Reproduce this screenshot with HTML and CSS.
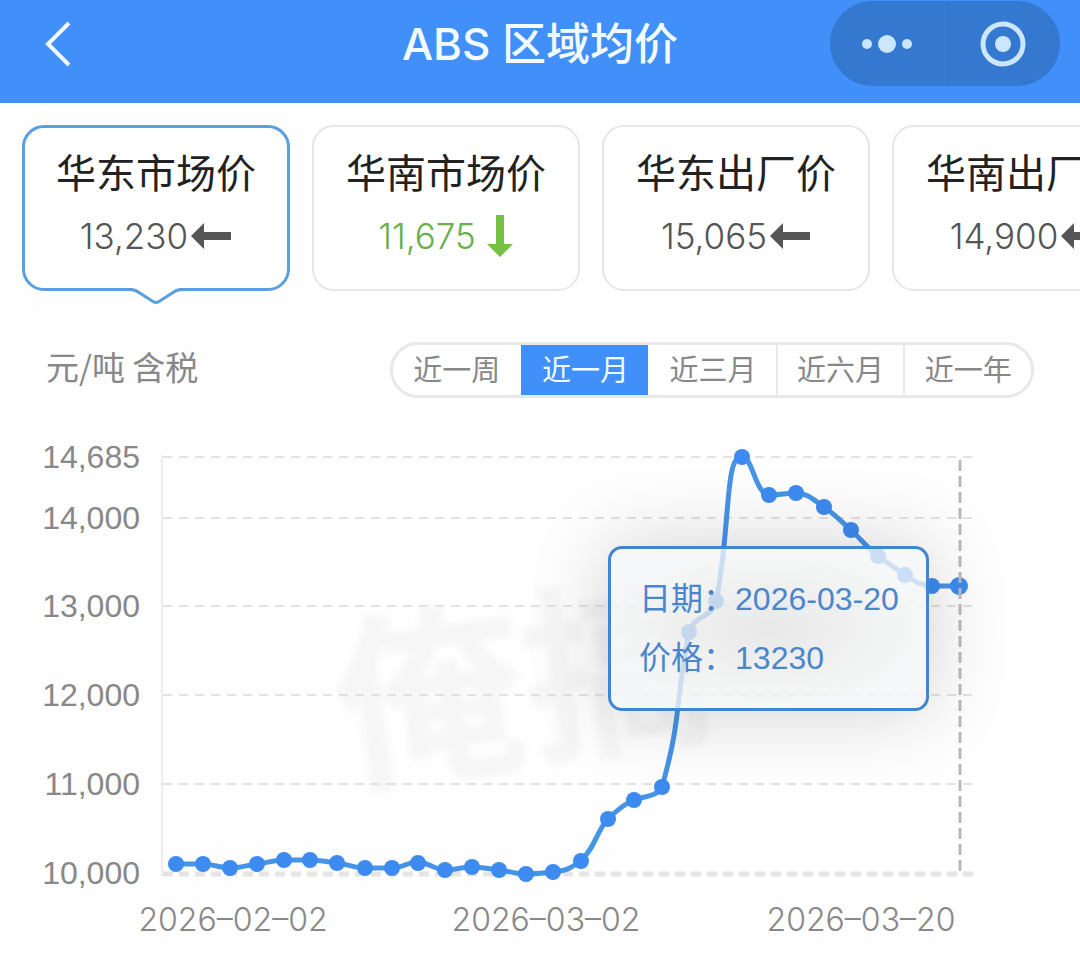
FILE: index.html
```html
<!DOCTYPE html>
<html lang="zh-CN">
<head>
<meta charset="utf-8">
<meta name="viewport" content="width=device-width, initial-scale=1">
<title>ABS 区域均价</title>
<link rel="stylesheet" href="styles.css">
</head>
<body>
<header class="topbar">
  <button class="back" type="button" aria-label="返回">
    <svg width="28" height="48" viewBox="0 0 28 48"><path d="M25 3 4 24l21 21"/></svg>
  </button>
  <h1 class="title">ABS 区域均价</h1>
  <div class="capsule">
    <button class="capsule-btn" type="button" aria-label="更多">
      <svg width="52" height="24" viewBox="0 0 52 24"><circle cx="6" cy="12" r="5"/><circle cx="26" cy="12" r="9"/><circle cx="46" cy="12" r="5"/></svg>
    </button>
    <button class="capsule-btn" type="button" aria-label="关闭">
      <svg width="48" height="48" viewBox="0 0 48 48"><circle class="ring" cx="24" cy="24" r="20"/><circle cx="24" cy="24" r="8"/></svg>
    </button>
  </div>
</header>
<main>
  <nav class="cards" aria-label="市场">
    <button class="card active" type="button">
      <span class="name">华东市场价</span>
      <span class="price">13,230<svg class="flat" width="42" height="28" viewBox="0 0 42 28"><path d="M1 14 14 1v9h27v8H14v9z"/></svg></span>
      <svg class="pointer" width="52" height="20" viewBox="0 0 52 20"><path class="mask" d="M3 0h46v2L28 15q-2 1-4 0L3 2z"/><path class="edge" d="M0 1.5q5 0 9 3l14 9q3 2 6 0l14-9q4-3 9-3"/></svg>
    </button>
    <button class="card" type="button">
      <span class="name">华南市场价</span>
      <span class="price down">11,675<svg class="drop" width="28" height="42" viewBox="0 0 28 42"><path d="M10 0h8v29h9L14 42 1 29h9z"/></svg></span>
    </button>
    <button class="card" type="button">
      <span class="name">华东出厂价</span>
      <span class="price">15,065<svg class="flat" width="42" height="28" viewBox="0 0 42 28"><path d="M1 14 14 1v9h27v8H14v9z"/></svg></span>
    </button>
    <button class="card" type="button">
      <span class="name">华南出厂价</span>
      <span class="price">14,900<svg class="flat" width="42" height="28" viewBox="0 0 42 28"><path d="M1 14 14 1v9h27v8H14v9z"/></svg></span>
    </button>
  </nav>
  <section class="filters">
    <span class="unit">元/吨 含税</span>
    <div class="ranges">
      <button class="range" type="button">近一周</button>
      <button class="range selected" type="button">近一月</button>
      <button class="range" type="button">近三月</button>
      <button class="range" type="button">近六月</button>
      <button class="range" type="button">近一年</button>
    </div>
  </section>
  <section class="chart">
    <svg class="plot" viewBox="0 398 1080 570" role="img" aria-label="价格走势">
      <g class="watermark" transform="rotate(-8 430 700)">
        <text x="335" y="767">俺搞</text>
      </g>
      <path class="axis" d="M162 455V876"/>
      <path class="grid" d="M163 457H974M163 518H974M163 606H974M163 695H974M163 784H974"/>
      <path class="base" d="M163 874H974"/>
      <g class="ylabels">
        <text x="140" y="468">14,685</text>
        <text x="140" y="529">14,000</text>
        <text x="140" y="617">13,000</text>
        <text x="140" y="706">12,000</text>
        <text x="140" y="795">11,000</text>
        <text x="140" y="884">10,000</text>
      </g>
      <g class="xlabels">
        <text x="233" y="931">2026–02–02</text>
        <text x="546" y="931">2026–03–02</text>
        <text x="861" y="931">2026–03–20</text>
      </g>
      <path class="line" d="M176 864H203C212 864 221 868 230 868S248 865 257 864 275 860 284 860H310C319 860 328 862 337 863S356 868 365 868H392C401 868 409 862 418 862S436 870 445 870 463 867 472 867 490 869 499 870 517 874 526 874 544 873 553 872C566 871 572 868 581 860C594 850 597 830 608 819C616 811 624 804 634 800S657 797 662 787C682 715 674 711 689 632C693 616 712 618 716 601C731 530 724 456 742 456C752 456 756 495 769 495S788 493 796 493C808 493 815 501 824 507S842 522 851 530 868 549 878 556 896 569 905 575 922 586 932 586H959"/>
      <g class="dots">
        <circle cx="176" cy="864" r="8"/><circle cx="203" cy="864" r="8"/><circle cx="230" cy="868" r="8"/><circle cx="257" cy="864" r="8"/><circle cx="284" cy="860" r="8"/><circle cx="310" cy="860" r="8"/><circle cx="337" cy="863" r="8"/><circle cx="365" cy="868" r="8"/><circle cx="392" cy="868" r="8"/><circle cx="418" cy="863" r="8"/>
        <circle cx="445" cy="870" r="8"/><circle cx="472" cy="867" r="8"/><circle cx="499" cy="870" r="8"/><circle cx="526" cy="874" r="8"/><circle cx="553" cy="872" r="8"/><circle cx="581" cy="861" r="8"/><circle cx="608" cy="819" r="8"/><circle cx="634" cy="800" r="8"/><circle cx="662" cy="787" r="8"/><circle cx="689" cy="632" r="8"/>
        <circle cx="716" cy="601" r="8"/><circle cx="742" cy="457" r="8"/><circle cx="769" cy="495" r="8"/><circle cx="796" cy="493" r="8"/><circle cx="824" cy="507" r="8"/><circle cx="851" cy="530" r="8"/><circle cx="878" cy="556" r="8"/><circle cx="905" cy="575" r="8"/><circle cx="932" cy="586" r="8"/><circle cx="959" cy="586" r="9"/>
      </g>
      <path class="cursor" d="M960 460V876"/>
    </svg>
    <div class="tooltip">
      <div>日期：2026-03-20</div>
      <div>价格：13230</div>
    </div>
  </section>
</main>
</body>
</html>
```
FILE: styles.css
```css
* { box-sizing: border-box; }

body {
  margin: 0;
  background: #fefefe;
  color: #222;
  font-family: "Liberation Sans", "Noto Sans CJK SC", sans-serif;
  overflow-x: hidden;
}

button {
  margin: 0;
  padding: 0;
  border: 0;
  background: none;
  color: inherit;
  font: inherit;
}

svg { display: block; }

.topbar {
  display: grid;
  grid-template-columns: 1fr auto 1fr;
  align-items: center;
  height: 103px;
  padding: 0 20px 16px;
  background: #418ff8;
}

.back {
  justify-self: start;
  margin-left: 24px;
}

.back path {
  fill: none;
  stroke: #f2fbff;
  stroke-width: 4;
}

.title {
  margin: 0;
  color: #f2fbff;
  font: 500 44px/64px Inter, "Noto Sans CJK SC", sans-serif;
}

.capsule {
  display: flex;
  justify-self: end;
  width: 230px;
  height: 85px;
  border-radius: 43px;
  background: #3478d0;
}

.capsule-btn {
  display: flex;
  flex: 1;
  align-items: center;
  justify-content: center;
}

.capsule-btn + .capsule-btn { border-left: 1px solid #3d7fd4; }

.capsule circle { fill: #cce6ff; }

.capsule .ring {
  fill: none;
  stroke: #cce6ff;
  stroke-width: 5;
}

.cards {
  display: flex;
  gap: 22px;
  padding: 22px 0 18px 22px;
  overflow: hidden;
}

.card {
  position: relative;
  display: flex;
  flex: 0 0 268px;
  flex-direction: column;
  align-items: center;
  gap: 10px;
  height: 166px;
  padding-top: 19px;
  border: 2px solid #e6e6e6;
  border-radius: 22px;
  background: #fff;
}

.card.active {
  padding-top: 18px;
  border: 3px solid #5a9fe0;
}

.name {
  font-size: 40px;
  line-height: 56px;
}

.price {
  display: flex;
  align-items: center;
  gap: 2px;
  height: 48px;
  color: #555;
  font: 300 35px/48px Inter, sans-serif;
}

.price.down {
  gap: 10px;
  color: #6ab04a;
}

.flat { fill: #555; }
.drop { fill: #76c043; }

.pointer {
  position: absolute;
  top: 100%;
  left: 50%;
  margin-left: -26px;
  overflow: visible;
}

.pointer .mask { fill: #fff; }

.pointer .edge {
  fill: none;
  stroke: #5a9fe0;
  stroke-width: 3;
}

.filters {
  display: flex;
  align-items: flex-start;
  justify-content: space-between;
  padding: 33px 46px 0;
}

.unit {
  color: #888;
  font: 33px/48px "Noto Sans CJK SC", sans-serif;
}

.ranges {
  display: grid;
  grid-template-columns: repeat(5, 1fr);
  width: 644px;
  height: 56px;
  border: 3px solid #e8e8e8;
  border-radius: 28px;
  background: #fff;
}

.range {
  padding-top: 2px;
  color: #888;
  font-size: 29px;
  line-height: 48px;
}

.range + .range { border-left: 2px solid #e8e8e8; }

.range.selected {
  border-color: #418ff8;
  background: #418ff8;
  color: #f2fbff;
}

.range.selected + .range { border-color: transparent; }

.chart { position: relative; }

.plot { width: 100%; }

.watermark text {
  fill: #f6f6f6;
  font: 700 190px "Noto Sans CJK SC", sans-serif;
  filter: blur(3px);
}

.axis {
  stroke: #eee;
  stroke-width: 2;
}

.grid {
  stroke: #e2e2e2;
  stroke-width: 2;
  stroke-dasharray: 9 7;
}

.base {
  stroke: #e4e4e6;
  stroke-width: 5;
  stroke-dasharray: 10 6;
}

.ylabels {
  fill: #888;
  font-size: 32px;
  text-anchor: end;
}

.xlabels {
  fill: #888;
  font: 300 32px Inter, sans-serif;
  text-anchor: middle;
}

.line {
  fill: none;
  stroke: #4694e6;
  stroke-width: 5;
}

.dots { fill: #3d8bf0; }

.cursor {
  stroke: #bbb;
  stroke-width: 3;
  stroke-dasharray: 11 5;
}

.tooltip {
  position: absolute;
  top: 26%;
  left: 56.3%;
  width: 321px;
  padding: 21px 28px 20px;
  border: 3px solid #3f86d2;
  border-radius: 14px;
  background: radial-gradient(closest-side, rgba(226, 226, 226, 0.78), rgba(244, 245, 246, 0.78));
  box-shadow: 0 0 80px rgba(0, 0, 0, 0.18);
  color: #4a86cc;
  font-size: 32px;
  line-height: 59px;
  white-space: nowrap;
}
```
